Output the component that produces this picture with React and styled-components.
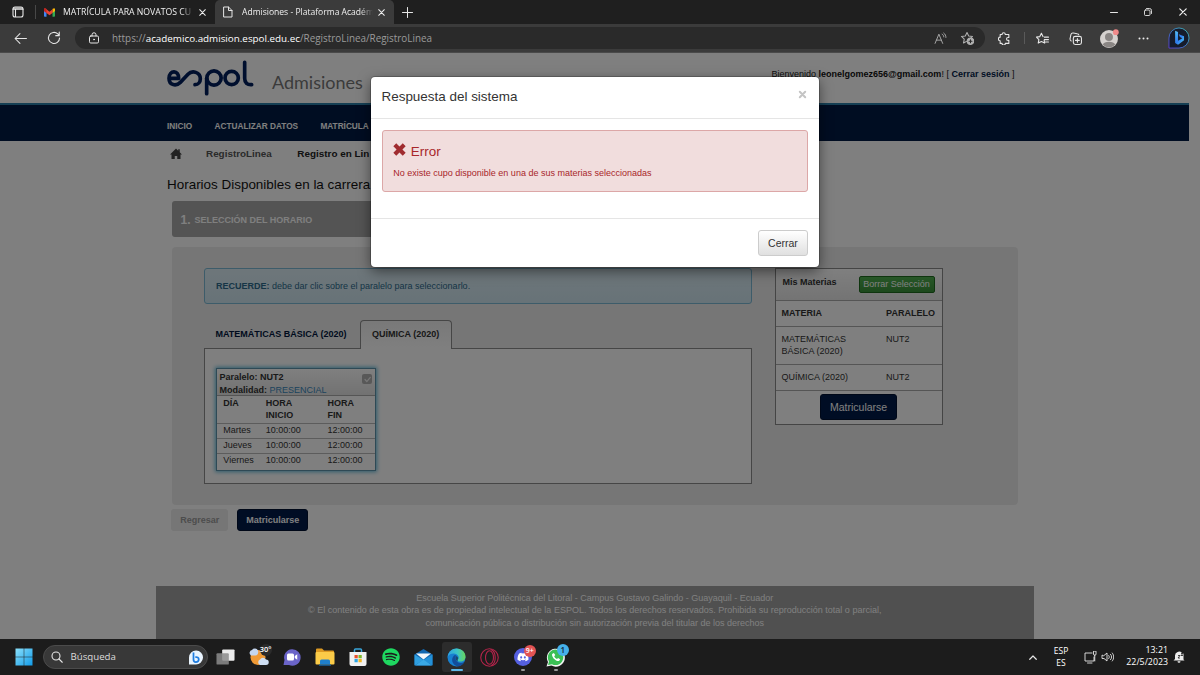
import React from "react";
import styled, { createGlobalStyle } from "styled-components";
import { FaSpotify, FaDiscord } from "react-icons/fa";

const GlobalStyle = createGlobalStyle`
  * { box-sizing: border-box; }
  body { margin: 0; background: #1c1c1c; overflow: hidden; }
  svg { display: block; flex: none; }
`;

const Screen = styled.div`
  width: 1200px;
  height: 675px;
  display: flex;
  flex-direction: column;
  overflow: hidden;
  font-family: "Liberation Sans", Arial, sans-serif;
  font-size: 9px;
  line-height: 12.6px;
  color: #333;
`;

/* ---------- Browser chrome ---------- */

const TabStrip = styled.div`
  height: 24px;
  flex: none;
  display: flex;
  background: #1f1f1f;
  color: #f0f0f0;
  font-family: "Open Sans", sans-serif;
`;
const TabMenu = styled.div`
  width: 36px;
  display: flex;
  align-items: center;
  justify-content: center;
  border-right: 1px solid #484848;
  margin: 5px 0;
`;
const Tab = styled.div`
  width: ${(p) => p.$width}px;
  display: flex;
  align-items: center;
  padding: 0 8px;
  background: ${(p) => (p.$active ? "#3b3b3b" : "transparent")};
  border-radius: 5px 5px 0 0;
`;
const TabTitle = styled.div`
  width: 131px;
  margin: 0 5px 0 ${(p) => p.$gap}px;
  height: 14px;
  white-space: nowrap;
  font-size: ${(p) => p.$size}px;
  line-height: 14px;
  mask-image: linear-gradient(to right, #000 90%, transparent);
`;
const NewTab = styled.div`
  width: 26px;
  display: flex;
  align-items: center;
  justify-content: center;
`;
const WindowButtons = styled.div`
  margin-left: auto;
  display: grid;
  grid-template-columns: 34px 34px 35px;
  align-items: center;
  justify-items: center;
`;
const Toolbar = styled.div`
  height: 29px;
  flex: none;
  display: flex;
  align-items: center;
  background: #3b3b3b;
  border-bottom: 1px solid #4a4a4a;
`;
const NavButtons = styled.div`
  width: 75px;
  display: grid;
  grid-template-columns: 33px 33px;
  padding-left: 4px;
  align-items: center;
  justify-items: center;
`;
const AddressBar = styled.div`
  width: 910px;
  height: 22px;
  border-radius: 11px;
  background: #2a2a2a;
  display: flex;
  align-items: center;
  padding: 0 11px 0 13px;
`;
const Url = styled.div`
  flex: 1;
  margin-left: 12px;
  font: 9.9px/14px "Open Sans", sans-serif;
  color: #9a9a9a;
`;
const UrlHost = styled.span`
  color: #fff;
  font-size: 9.84px;
`;
const AddressIcons = styled.div`
  display: flex;
  align-items: center;
  gap: 13px;
`;
const ToolbarIcons = styled.div`
  display: grid;
  grid-template-columns: 39px 1px 34px 33px 35px 33px 38px;
  align-items: center;
  justify-items: center;
`;
const Divider = styled.span`
  width: 1px;
  height: 12px;
  background: #5a5a5a;
`;

/* ---------- Page ---------- */

const Page = styled.main`
  position: relative;
  height: 586px;
  flex: none;
  background: #fff;
  overflow: hidden;
`;
const Header = styled.header`
  height: 50px;
  padding: 7px 0 0 166px;
  display: flex;
  align-items: flex-start;
`;
const SiteName = styled.div`
  margin: 9px 0 0 18px;
  width: 499.5px;
  font: 400 18px/26px Lato, sans-serif;
  color: #777;
`;
const Session = styled.div`
  margin: 8px 0 0;
  color: #222;
  white-space: nowrap;
  b { color: #111; }
  b + b { color: #001a48; }
`;
const Nav = styled.nav`
  width: 1189px;
  height: 38px;
  border-top: 2px solid #2b7fa8;
  background: #001a44;
  color: #fff;
  padding: 16px 0 0 167px;
  display: flex;
  gap: 22.3px;
  font-size: 8.25px;
  font-weight: bold;
`;
const Breadcrumb = styled.div`
  height: 26px;
  padding-left: 170px;
  display: flex;
  align-items: center;
  font-size: 9.9px;
  font-weight: bold;
  color: #555;
  svg { margin-bottom: 2px; }
`;
const Crumb = styled.span`
  margin-left: ${(p) => p.$gap}px;
  color: ${(p) => (p.$current ? "#222" : "#555")};
`;
const Heading = styled.h1`
  margin: 9px 0 7px 167px;
  font-size: 13.45px;
  line-height: 18px;
  font-weight: normal;
  color: #111;
`;
const StepBar = styled.div`
  margin-left: 171.5px;
  width: 280px;
  height: 36px;
  padding: 2px 0 0 9px;
  border-radius: 3px;
  display: flex;
  align-items: center;
  background: #a8a8a8;
  color: #fff;
  font-weight: bold;
  gap: 4px;
`;
const StepNumber = styled.span`
  font-size: 12px;
`;
const Panel = styled.section`
  margin: 9.5px 0 0 171.5px;
  width: 846.5px;
  height: 258px;
  border-radius: 4px;
  background: #ededed;
  padding: 21px 0 0 32.5px;
  display: flex;
  align-items: flex-start;
  gap: 22.6px;
`;
const Schedule = styled.div`
  width: 548px;
`;
const Notice = styled.div`
  height: 36.5px;
  padding: 11px;
  border: 1px solid #7ab8d4;
  border-radius: 3px;
  background: linear-gradient(#dcedf5, #cfe6f0);
  color: #2d6a8c;
`;
const Tabs = styled.div`
  margin-top: 16px;
  display: flex;
  font-weight: bold;
`;
const ScheduleTab = styled.div`
  height: 29px;
  margin-bottom: -1px;
  padding: ${(p) => (p.$active ? "7px 11px" : "8px 11.5px")};
  width: ${(p) => (p.$active ? 91.5 : 156)}px;
  border: ${(p) => (p.$active ? "1px solid #8c8c8c" : "0")};
  border-bottom: 0;
  border-radius: 4px 4px 0 0;
  background: ${(p) => (p.$active ? "linear-gradient(#f2f2f2, #fff)" : "transparent")};
  color: ${(p) => (p.$active ? "#333" : "#00163c")};
  white-space: nowrap;
`;
const ScheduleBox = styled.div`
  height: 136px;
  border: 1px solid #8c8c8c;
  background: #fff;
  padding: 18.5px 11px;
`;
const ParallelCard = styled.div`
  width: 160px;
  height: 103px;
  border: 1px solid #5c93aa;
  background: #fff;
  box-shadow: 0 0 4px 1px #5fb8d8;
`;
const CardHead = styled.div`
  height: 27px;
  padding: 2.5px 3px 0 2.5px;
  display: flex;
  justify-content: space-between;
  background: linear-gradient(#fff, #e4e4e4);
  border-bottom: 1px solid #aaa;
  font-weight: bold;
`;
const Mode = styled.span`
  font-weight: normal;
  color: #3a88bb;
`;
const CheckMark = styled.span`
  width: 10px;
  height: 10px;
  margin-top: 3px;
  border-radius: 2px;
  background: #b0b0b0;
  display: flex;
  align-items: center;
  justify-content: center;
`;
const HourRow = styled.div`
  display: grid;
  grid-template-columns: 42.5px 61.7px 48px;
  padding: ${(p) => (p.$head ? 1 : 0.3)}px 0 0 6.3px;
  height: ${(p) => (p.$head ? 27.5 : 15)}px;
  font-weight: ${(p) => (p.$head ? "bold" : "normal")};
  border-top: ${(p) => (p.$head ? "0" : "1px solid #b8b8b8")};
`;
const CellNarrow = styled.span`
  width: 34px;
  white-space: nowrap;
`;

const Subjects = styled.aside`
  width: 168px;
  height: 157px;
  border: 1px solid #8a8a8a;
  background: #fff;
`;
const SubjectsHead = styled.div`
  height: 31.5px;
  padding: 7px 7px 0;
  display: flex;
  justify-content: space-between;
  background: linear-gradient(#fff, #e8e8e8);
  font-weight: bold;
`;
const ClearButton = styled.div`
  width: 76px;
  height: 17px;
  border: 1px solid #1f6b1f;
  border-radius: 2px;
  background: linear-gradient(#4fae4f, #3a923a);
  color: #fff;
  font-weight: normal;
  line-height: 15px;
  text-align: center;
  white-space: nowrap;
`;
const SubjectRow = styled.div`
  height: ${(p) => p.$height}px;
  border-top: 1px solid #aaa;
  padding: 5.8px 0 0 6px;
  display: grid;
  grid-template-columns: 104.5px 56px;
  font-weight: ${(p) => (p.$head ? "bold" : "normal")};
`;
const SubjectsFoot = styled.div`
  border-top: 1px solid #aaa;
  padding-top: 3px;
  display: flex;
  justify-content: center;
`;
const PrimaryButton = styled.div`
  width: ${(p) => (p.$small ? 71 : 77)}px;
  height: ${(p) => (p.$small ? 22 : 26)}px;
  line-height: ${(p) => (p.$small ? 20 : 24)}px;
  font-size: ${(p) => (p.$small ? 9 : 10.5)}px;
  font-weight: ${(p) => (p.$small ? "bold" : "normal")};
  border: 1px solid #001030;
  border-radius: 3px;
  background: #001a48;
  color: #fff;
  text-align: center;
`;
const BackButton = styled.div`
  width: 57px;
  height: 22px;
  line-height: 22px;
  border-radius: 3px;
  background: #ececec;
  color: #9a9a9a;
  font-weight: bold;
  text-align: center;
`;
const Actions = styled.div`
  margin: 4px 0 0 171.3px;
  display: flex;
  gap: 9px;
`;
const Footer = styled.footer`
  margin: 55.5px 0 0 156px;
  width: 877.5px;
  height: 54px;
  padding-top: 5.5px;
  background: #a0a0a0;
  color: #fff;
  text-align: center;
  line-height: 12.75px;
  white-space: nowrap;
`;

/* ---------- Modal ---------- */

const Backdrop = styled.div`
  position: absolute;
  inset: 0;
  background: rgba(0, 0, 0, 0.5);
`;
const Dialog = styled.div`
  margin: 24px 0 0 371px;
  width: 448px;
  height: 190px;
  border-radius: 4px;
  background: #fff;
  box-shadow: 0 0 0 1px rgba(0, 0, 0, 0.2), 0 4px 13px rgba(0, 0, 0, 0.5);
`;
const DialogHead = styled.div`
  height: 42px;
  padding: 0 12px 0 10.5px;
  border-bottom: 1px solid #e5e5e5;
  display: flex;
  justify-content: space-between;
  font-size: 13.45px;
  line-height: 40px;
  svg { margin-top: 13px; }
`;
const DialogBody = styled.div`
  height: 99px;
  padding: 11px;
`;
const ErrorBox = styled.div`
  height: 62px;
  border: 1px solid #dca7a7;
  border-radius: 3px;
  background: #f1dddd;
  color: #a8262a;
  padding: 12px 10.3px 0;
`;
const ErrorTitle = styled.div`
  display: flex;
  gap: 4.5px;
  height: 24px;
  font-size: 13.45px;
  line-height: 18px;
`;
const DialogFoot = styled.div`
  border-top: 1px solid #e5e5e5;
  padding: 11px 11px 0 0;
  display: flex;
  justify-content: flex-end;
`;
const CloseButton = styled.div`
  width: 50px;
  height: 26px;
  border: 1px solid #ccc;
  border-radius: 3px;
  background: linear-gradient(#fff, #e0e0e0);
  font-size: 10.5px;
  line-height: 24px;
  text-align: center;
`;

/* ---------- Taskbar ---------- */

const Taskbar = styled.div`
  height: 36px;
  flex: none;
  display: flex;
  align-items: center;
  background: #1c1c1c;
  color: #fff;
  font-family: "Open Sans", sans-serif;
`;
const StartButton = styled.div`
  width: 43px;
  padding-left: 5px;
  display: flex;
  justify-content: center;
`;
const Search = styled.div`
  width: 164.5px;
  height: 24px;
  border: 1px solid #4b4b4b;
  border-radius: 12px;
  background: #383838;
  display: flex;
  align-items: center;
  padding: 0 4px 0 7px;
  color: #dcdcdc;
  font-size: 9.7px;
`;
const SearchLabel = styled.span`
  flex: 1;
  margin-left: 7.5px;
`;
const Apps = styled.div`
  display: grid;
  grid-template-columns: repeat(11, 33px);
  margin-left: 1.5px;
  justify-items: center;
`;
const AppIcon = styled.div`
  position: relative;
  width: 30px;
  height: 30px;
  border-radius: 3px;
  background: ${(p) => (p.$active ? "#2c2c2c" : "transparent")};
  color: ${(p) => p.$color || "#fff"};
  display: flex;
  align-items: center;
  justify-content: center;
  &::after {
    content: "";
    position: absolute;
    left: 50%;
    bottom: 1px;
    height: 2px;
    width: ${(p) => (p.$active ? 12 : p.$open ? 4 : 0)}px;
    transform: translateX(-50%);
    border-radius: 1px;
    background: ${(p) => (p.$active ? "#5fb9e8" : "#9a9a9a")};
  }
`;
const Badge = styled.span`
  position: absolute;
  top: ${(p) => p.$top}px;
  right: ${(p) => p.$right}px;
  min-width: 11.5px;
  height: 11.5px;
  border-radius: 6px;
  background: ${(p) => p.$bg};
  color: ${(p) => p.$fg};
  font-size: ${(p) => p.$size}px;
  font-weight: 600;
  line-height: 11.5px;
  text-align: center;
`;
const DiscordDisc = styled.span`
  width: 18px;
  height: 18px;
  border-radius: 50%;
  background: #5560e0;
  color: #fff;
  display: flex;
  align-items: center;
  justify-content: center;
`;
const Tray = styled.div`
  margin-left: auto;
  width: 175px;
  display: grid;
  grid-template-columns: 16px 40px 18px 17px 52px 22px;
  align-items: center;
  justify-items: center;
  font-size: 8.5px;
  line-height: 11.7px;
  text-align: center;
`;
const Clock = styled.div`
  justify-self: end;
  font-size: 8.8px;
  text-align: right;
`;

/* ---------- Icons ---------- */

const Line = ({ w = 12, h = w, box = "0 0 24 24", color = "#e6e6e6", sw = 2, children }) => (
  <svg width={w} height={h} viewBox={box} fill="none" stroke={color} strokeWidth={sw} strokeLinecap="round" strokeLinejoin="round">
    {children}
  </svg>
);

const CloseX = ({ size = 7, color = "#eee" }) => (
  <Line w={size} box="0 0 10 10" color={color} sw={1.5}><path d="M1 1l8 8M9 1L1 9" /></Line>
);

const GmailIcon = () => (
  <svg width="11" height="9" viewBox="0 0 22 18">
    <path d="M0 3v13a1.500 1.500 0 0 0 1.500 1.500H5V6z" fill="#4285f4" />
    <path d="M22 3v13a1.500 1.500 0 0 1-1.500 1.500H17V6z" fill="#34a853" />
    <path d="M17 2l3-1.500a2 2 0 0 1 2 2.500v3l-5 4z" fill="#fbbc04" />
    <path d="M0 3a2 2 0 0 1 3-2l8 6.500L19 1l-2 1v8l-6 4.500L5 10 0 6z" fill="#ea4335" />
    <path d="M0 3v3l5 4V2L3 .8A2 2 0 0 0 0 3z" fill="#c5221f" />
  </svg>
);

const HomeIcon = () => (
  <svg width="12" height="11" viewBox="0 0 24 22" fill="#444">
    <path d="M12 1l4.500 4.500V2.500h3v6L24 13h-3v9h-6.500v-6h-5v6H3v-9H0z" />
  </svg>
);

const EspolLogo = () => (
  <svg width="88" height="37" viewBox="0 0 264 111" fill="none" stroke="#001f5c" strokeWidth="11" strokeLinecap="round" strokeLinejoin="round">
    <path d="M10 55H38C40 30 9 28 9 55C9 77 31 79 43 67L66 43C79 29 103 37 103 56C103 66 97 74 87 74" />
    <path d="M122 101V55" />
    <circle cx="144" cy="54" r="21.500" />
    <circle cx="197" cy="54" r="20" />
    <path d="M236 7V55C236 69 244 75 257 74" />
  </svg>
);

const BingBubble = () => (
  <svg width="22" height="22" viewBox="0 0 46 46">
    <defs>
      <linearGradient id="bingRing" x1="0" y1="1" x2="1" y2="0">
        <stop offset="0" stopColor="#5a3fd0" /><stop offset="0.500" stopColor="#3b78c4" /><stop offset="1" stopColor="#3fb7b0" />
      </linearGradient>
      <linearGradient id="bingB" x1="0" y1="0" x2="1" y2="1">
        <stop offset="0" stopColor="#5ac8fa" /><stop offset="0.500" stopColor="#2f7bf0" /><stop offset="1" stopColor="#4fd0f5" />
      </linearGradient>
    </defs>
    <path d="M2 44V23A21 21 0 1 1 23 44Z" fill="#161c2c" stroke="url(#bingRing)" strokeWidth="2" />
    <path d="M15 8l6 2.500v18l9-5-5-2.500-2.500-6 11 4.500v8L21 37l-6-3.500z" fill="url(#bingB)" />
  </svg>
);

const BingDot = () => (
  <svg width="15" height="15" viewBox="0 0 30 30">
    <path d="M2 29V15A14 14 0 1 1 15 29Z" fill="#eaf5ff" />
    <path d="M11 5v14.500a4.500 4.500 0 0 0 4.500 4.500c4 0 6-2.500 6-5.500s-3-5-7-4" fill="none" stroke="#1f7de0" strokeWidth="3.500" />
  </svg>
);

const Avatar = () => (
  <svg width="19" height="19" viewBox="0 0 36 36">
    <circle cx="17" cy="19" r="17" fill="#d6d2cf" />
    <circle cx="17" cy="15" r="7.500" fill="#8a8684" />
    <path d="M5 30c2-8 22-8 24 0a17 17 0 0 1-24 0z" fill="#8a8684" />
    <circle cx="30" cy="6" r="5.500" fill="#f08a8a" />
  </svg>
);

const StarPath = "M12 2.500l2.900 6 6.600.9-4.800 4.600 1.200 6.500L12 17.400l-5.900 3.100 1.200-6.500L2.500 9.400l6.600-.9z";

const TaskView = () => (
  <svg width="19" height="18" viewBox="0 0 40 36">
    <rect x="13" y="2" width="26" height="24" rx="2" fill="#ececec" />
    <rect x="1" y="10" width="26" height="24" rx="2" fill="#8c8c8c" opacity="0.850" />
  </svg>
);

const Weather = () => (
  <svg width="20" height="20" viewBox="0 0 40 40">
    <circle cx="18" cy="21" r="15" fill="#f09a35" />
    <path d="M4 17a6 6 0 0 1 2-11 7 7 0 0 1 12 1c2 4-1 10-5 10z" fill="#c5d6ee" />
    <path d="M22 36a6 6 0 0 1 0-11 7 7 0 0 1 12 0 5.500 5.500 0 0 1 0 11z" fill="#cfdff3" />
  </svg>
);

const Chat = () => (
  <svg width="18" height="18" viewBox="0 0 36 36">
    <path d="M1 34l2-10A16.500 16.500 0 1 1 12 34z" fill="#6a64c8" />
    <rect x="8" y="11" width="14" height="14" rx="3" fill="#fff" />
    <path d="M23.500 16l5-3.500v11l-5-3.500z" fill="#fff" />
  </svg>
);

const Folder = () => (
  <svg width="20" height="18" viewBox="0 0 40 36">
    <path d="M2 3a2 2 0 0 1 2-2h10l4 4h18a2 2 0 0 1 2 2v8H2z" fill="#dd9a22" />
    <rect x="1" y="8" width="38" height="25" rx="2" fill="#fbcb48" />
    <path d="M10 33v-7a3 3 0 0 1 3-3h14a3 3 0 0 1 3 3v7z" fill="#1f7fcb" />
    <path d="M8 33h24v2.500H8z" fill="#14619f" />
  </svg>
);

const Store = () => (
  <svg width="18" height="19" viewBox="0 0 36 38">
    <path d="M11 10V4a2 2 0 0 1 2-2h10a2 2 0 0 1 2 2v6" fill="none" stroke="#38a5da" strokeWidth="3" />
    <path d="M1 8h34v24a4 4 0 0 1-4 4H5a4 4 0 0 1-4-4z" fill="#f1f1f1" />
    <path d="M11 14h6.500v6.500H11z" fill="#e8502c" /><path d="M19 14h6.500v6.500H19z" fill="#7cb928" />
    <path d="M11 22h6.500v6.500H11z" fill="#2ba4e4" /><path d="M19 22h6.500v6.500H19z" fill="#f5b51e" />
  </svg>
);

const Mail = () => (
  <svg width="19" height="17" viewBox="0 0 38 34">
    <path d="M1 11L19 0l18 11v20a2 2 0 0 1-2 2H3a2 2 0 0 1-2-2z" fill="#1267b0" />
    <path d="M4 9h30l-15 12z" fill="#f3f7fa" />
    <path d="M1 11l18 11L1 33z" fill="#2f9fe0" /><path d="M37 11L19 22l18 11z" fill="#2391d8" />
    <path d="M2 33l17-12 17 12z" fill="#3aa9e6" />
  </svg>
);

const Edge = () => (
  <svg width="19" height="19" viewBox="0 0 38 38">
    <defs>
      <linearGradient id="edgeTop" x1="0" y1="0.500" x2="1" y2="0.500">
        <stop offset="0" stopColor="#2d9fe3" /><stop offset="0.550" stopColor="#3cc5c4" /><stop offset="1" stopColor="#68d65b" />
      </linearGradient>
    </defs>
    <circle cx="19" cy="19" r="18" fill="#1780d0" />
    <path d="M1 18C3 7 10 1 19 1c11 0 18 8 18 16 0 6-4 10-10 10-4 0-6-1-6-3 2-2 3-4 2-7-3-8-17-8-22 1z" fill="url(#edgeTop)" />
    <path d="M14 15c-7 7-4 19 8 22 6-1 10-4 13-9-10 5-19-1-18-9 0-2 1-3 2-4-2-1-4-1-5 0z" fill="#124d9a" />
    <path d="M19 16c-3 3-2 9 3 11 0-1-1-2-1-3 2-2 2-6-2-8z" fill="#1c1c1c" opacity="0.550" />
  </svg>
);

const Opera = () => (
  <Line w={19} box="0 0 38 38" color="#b3244a" sw={2.2}>
    <circle cx="19" cy="19" r="17.500" /><ellipse cx="19" cy="19" rx="8" ry="13.500" /><path d="M22 3c10 4 12 25 1 32" />
  </Line>
);

const WhatsApp = () => (
  <svg width="19" height="19" viewBox="0 0 38 38">
    <path d="M1 37l3-9A18 18 0 1 1 11 35z" fill="#f4f4f4" />
    <path d="M4 34l2-7a15.500 15.500 0 1 1 6 5.500z" fill="#3bbf55" />
    <g transform="translate(11.500 10) scale(.7)"><path d="M6 0L1 3C-1 12 12 25 21 23l3-5-6-4-3 3c-4-2-6-4-8-8l3-3z" fill="#fff" /></g>
  </svg>
);

const Windows = () => (
  <svg width="18" height="18" viewBox="0 0 36 36">
    <defs>
      <linearGradient id="win" x1="0" y1="0" x2="1" y2="1"><stop offset="0" stopColor="#8be0fb" /><stop offset="1" stopColor="#119be8" /></linearGradient>
    </defs>
    <path d="M1 1h16.500v16.500H1zM18.500 1H35v16.500H18.500zM1 18.500h16.500V35H1zM18.500 18.500H35V35H18.500z" fill="url(#win)" />
  </svg>
);

const HOURS = ["Martes", "Jueves", "Viernes"];

export default function App() {
  return (
    <Screen>
      <GlobalStyle />
      <TabStrip>
        <TabMenu>
          <Line w={12} box="0 0 24 24" sw={2.2}><rect x="2" y="2" width="20" height="20" rx="4" /><path d="M2 6.500h20M7 7v14M3 4h18" /></Line>
        </TabMenu>
        <Tab $width={179}>
          <GmailIcon />
          <TabTitle $size={8.7} $gap={8}>MATRÍCULA PARA NOVATOS CU</TabTitle>
          <CloseX />
        </Tab>
        <Tab $width={179} $active>
          <Line w={10} h={12} box="0 0 20 24"><path d="M2 2h9l7 7v13H2zM11 2v7h7" /></Line>
          <TabTitle $size={8.55} $gap={9}>Admisiones - Plataforma Académ</TabTitle>
          <CloseX />
        </Tab>
        <NewTab><Line w={11} box="0 0 12 12" sw={1.1}><path d="M6 .5v11M.5 6h11" /></Line></NewTab>
        <WindowButtons>
          <Line w={8} box="0 0 8 8" sw={1}><path d="M.5 4.500h7" /></Line>
          <Line w={8} box="0 0 16 16" sw={1.8}><rect x="1" y="4" width="11" height="11" rx="2" /><path d="M5 1h6a4 4 0 0 1 4 4v6" /></Line>
          <CloseX size={8} />
        </WindowButtons>
      </TabStrip>
      <Toolbar>
        <NavButtons>
          <Line w={13} sw={1.9}><path d="M23 12H2M11 3L2 12l9 9" /></Line>
          <Line w={14} sw={1.9}><path d="M21.500 12a9.500 9.500 0 1 1-3-7L21 7.500M21 2v6h-6" /></Line>
        </NavButtons>
        <AddressBar>
          <Line w={12} sw={2}><rect x="3" y="8" width="18" height="14" rx="2.500" /><path d="M8 8V5.500a4 4 0 0 1 8 0V8" /><circle cx="12" cy="15" r="1" /></Line>
          <Url>https://<UrlHost>academico.admision.espol.edu.ec</UrlHost>/RegistroLinea/RegistroLinea</Url>
          <AddressIcons>
            <Line w={13} color="#a8a8a8" sw={1.8}><path d="M2 21L9 4l7 17M4.500 15h9M15 4c2 1 3 3 3 5M18 2c3 2 4 5 4 8" /></Line>
            <Line w={14} color="#b0b0b0" sw={1.8}><path d={StarPath} /><circle cx="18" cy="17.500" r="5.500" fill="#b0b0b0" /><path d="M18 15v5M15.500 17.500h5" stroke="#2a2a2a" /></Line>
          </AddressIcons>
        </AddressBar>
        <ToolbarIcons>
          <Line w={13}><path d="M7.500 4.500a3 3 0 0 1 6 0H20v5.500h-1.500a2.700 2.700 0 0 0 0 5.500H20V21h-6.500a3 3 0 0 1-6 0H4v-5a3 3 0 0 1 0-6.500v-5z" /></Line>
          <Divider />
          <Line w={13}><path d="M15 15l1 5.500-6-3.100-5.900 3.100 1.200-6.500L.8 9.400l6.300-.9 2.900-6 2.900 6M15.500 9.500H23M15.500 14H23M17.500 18.500H23" /></Line>
          <Line w={13}><rect x="8" y="8" width="15" height="15" rx="3.500" /><path d="M15.500 12v7M12 15.500h7M4 16.500A4 4 0 0 1 2 12L3.500 5A4 4 0 0 1 8 2l7 1.200A4 4 0 0 1 18 5" /></Line>
          <Avatar />
          <svg width="11" height="3" viewBox="0 0 11 3" fill="#eee"><circle cx="1.500" cy="1.500" r="1" /><circle cx="5.500" cy="1.500" r="1" /><circle cx="9.500" cy="1.500" r="1" /></svg>
          <BingBubble />
        </ToolbarIcons>
      </Toolbar>

      <Page>
        <Header>
          <EspolLogo />
          <SiteName>Admisiones</SiteName>
          <Session>Bienvenido <b>leonelgomez656@gmail.com</b>! [ <b>Cerrar sesión</b> ]</Session>
        </Header>
        <Nav>
          <span>INICIO</span>
          <span>ACTUALIZAR DATOS</span>
          <span>MATRÍCULA</span>
        </Nav>
        <Breadcrumb>
          <HomeIcon />
          <Crumb $gap={24}>RegistroLinea</Crumb>
          <Crumb $gap={25.5} $current>Registro en Lin</Crumb>
        </Breadcrumb>
        <Heading>Horarios Disponibles en la carrera</Heading>
        <StepBar><StepNumber>1.</StepNumber><span>SELECCIÓN DEL HORARIO</span></StepBar>
        <Panel>
          <Schedule>
            <Notice><b>RECUERDE:</b> debe dar clic sobre el paralelo para seleccionarlo.</Notice>
            <Tabs>
              <ScheduleTab>MATEMÁTICAS BÁSICA (2020)</ScheduleTab>
              <ScheduleTab $active>QUÍMICA (2020)</ScheduleTab>
            </Tabs>
            <ScheduleBox>
              <ParallelCard>
                <CardHead>
                  <div>Paralelo: NUT2<br />Modalidad: <Mode>PRESENCIAL</Mode></div>
                  <CheckMark><Line w={7} box="0 0 10 10" color="#eee" sw={1.8}><path d="M1.500 5l2.500 3 5-6" /></Line></CheckMark>
                </CardHead>
                <HourRow $head><span>DÍA</span><CellNarrow>HORA<br />INICIO</CellNarrow><CellNarrow>HORA<br />FIN</CellNarrow></HourRow>
                {HOURS.map((day) => (
                  <HourRow key={day}><span>{day}</span><span>10:00:00</span><span>12:00:00</span></HourRow>
                ))}
              </ParallelCard>
            </ScheduleBox>
          </Schedule>
          <Subjects>
            <SubjectsHead><span>Mis Materias</span><ClearButton>Borrar Selección</ClearButton></SubjectsHead>
            <SubjectRow $head $height={26}><span>MATERIA</span><span>PARALELO</span></SubjectRow>
            <SubjectRow $height={38}><span>MATEMÁTICAS<br />BÁSICA (2020)</span><span>NUT2</span></SubjectRow>
            <SubjectRow $height={26}><span>QUÍMICA (2020)</span><span>NUT2</span></SubjectRow>
            <SubjectsFoot><PrimaryButton>Matricularse</PrimaryButton></SubjectsFoot>
          </Subjects>
        </Panel>
        <Actions>
          <BackButton>Regresar</BackButton>
          <PrimaryButton $small>Matricularse</PrimaryButton>
        </Actions>
        <Footer>
          <div>Escuela Superior Politécnica del Litoral - Campus Gustavo Galindo - Guayaquil - Ecuador</div>
          <div>© El contenido de esta obra es de propiedad intelectual de la ESPOL. Todos los derechos reservados. Prohibida su reproducción total o parcial,</div>
          <div>comunicación pública o distribución sin autorización previa del titular de los derechos</div>
        </Footer>

        <Backdrop>
          <Dialog>
            <DialogHead><span>Respuesta del sistema</span><Line w={9} box="0 0 9 9" color="#c4c4c4" sw={2}><path d="M1.800 1.800l5.400 5.400M7.200 1.800L1.800 7.200" /></Line></DialogHead>
            <DialogBody>
              <ErrorBox>
                <ErrorTitle>
                  <svg width="13" height="13" viewBox="0 0 12 12" fill="#a02c30"><path d="M3 .3L6 3.300 9 .3l2.700 2.700-3 3 3 3L9 11.700l-3-3-3 3L.3 9l3-3-3-3z" /></svg>
                  <span>Error</span>
                </ErrorTitle>
                <div>No existe cupo disponible en una de sus materias seleccionadas</div>
              </ErrorBox>
            </DialogBody>
            <DialogFoot><CloseButton>Cerrar</CloseButton></DialogFoot>
          </Dialog>
        </Backdrop>
      </Page>

      <Taskbar>
        <StartButton><Windows /></StartButton>
        <Search>
          <Line w={12} sw={2.2}><circle cx="10" cy="10" r="8" /><path d="M16 16l6.500 6.500" /></Line>
          <SearchLabel>Búsqueda</SearchLabel>
          <BingDot />
        </Search>
        <Apps>
          <AppIcon><TaskView /></AppIcon>
          <AppIcon><Weather /><Badge $top={2} $right={2} $bg="#2b2b2b" $fg="#fff" $size={7.5}>30°</Badge></AppIcon>
          <AppIcon><Chat /></AppIcon>
          <AppIcon><Folder /></AppIcon>
          <AppIcon><Store /></AppIcon>
          <AppIcon $color="#1ed760"><FaSpotify size={18} /></AppIcon>
          <AppIcon><Mail /></AppIcon>
          <AppIcon $active><Edge /></AppIcon>
          <AppIcon><Opera /></AppIcon>
          <AppIcon $open><DiscordDisc><FaDiscord size={12} /></DiscordDisc><Badge $top={3} $right={2} $bg="#e25353" $fg="#fff" $size={7}>9+</Badge></AppIcon>
          <AppIcon $open><WhatsApp /><Badge $top={2} $right={2} $bg="#45b1ea" $fg="#112233" $size={8}>1</Badge></AppIcon>
        </Apps>
        <Tray>
          <Line w={8} h={5} box="0 0 16 10" sw={2.4}><path d="M1.500 8.500L8 2l6.500 6.500" /></Line>
          <div>ESP<br />ES</div>
          <Line w={13} box="0 0 26 26" sw={1.8}><path d="M16 4H2v16h18v-8M7 24h9M19 1v5a2.500 2.500 0 0 0 5 0V1zM21.500 8.500V20" /></Line>
          <Line w={13} h={12} box="0 0 26 24" sw={1.8}><path d="M2 9v6h4l6 5V4L6 9zM15.500 9c1.500 2 1.500 4 0 6M19 6.500c3 3 3 8 0 11M22.500 4c4 5 4 11 0 16" /></Line>
          <Clock>13:21<br />22/5/2023</Clock>
          <svg width="12" height="12" viewBox="0 0 24 24" fill="#eee"><path d="M4 9a8 8 0 0 1 14-5l3 1v12l2 2H1l3-3zM9 20.500h6a3 3 0 0 1-6 0z" /><path d="M10 9h4l-4 5h4M16 5h4l-4 4h4" fill="none" stroke="#1c1c1c" strokeWidth="1.600" /></svg>
        </Tray>
      </Taskbar>
    </Screen>
  );
}
